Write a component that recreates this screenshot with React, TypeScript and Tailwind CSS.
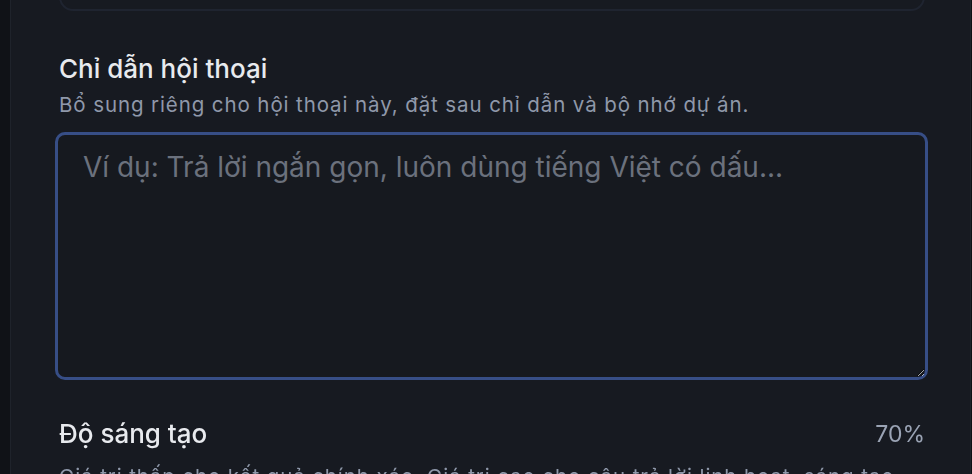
import { useState } from "react";

export default function App() {
  const [note, setNote] = useState("");

  return (
    <div
      className="flex h-[474px] w-full overflow-hidden bg-[#171a21]"
      style={{ fontFamily: "Inter, 'Noto Sans', sans-serif" }}
    >
      {/* sidebar edge */}
      <div className="w-[11px] shrink-0 border-r border-[#1f232b] bg-[#101217]" />

      <div className="flex min-w-0 flex-1 flex-col pl-[48px] pr-[45px]">
        {/* bottom of the previous card */}
        <div className="-mt-[40px] h-[51px] shrink-0 rounded-[14px] border-2 border-[#1f2430]" />

        {/* conversation instructions */}
        <section className="mt-[42px]">
          <h2 className="text-[26px] leading-[32px] font-medium text-[#e8eaee]">Chỉ dẫn hội thoại</h2>
          <p className="mt-[7px] text-[20.5px] leading-[26px] tracking-[0.9px] text-[#8f98aa]">
            Bổ sung riêng cho hội thoại này, đặt sau chỉ dẫn và bộ nhớ dự án.
          </p>
          <textarea
            autoFocus
            value={note}
            onChange={(e) => setNote(e.target.value)}
            placeholder="Ví dụ: Trả lời ngắn gọn, luôn dùng tiếng Việt có dấu..."
            className="mt-[14px] -mx-[4px] block h-[248px] w-[calc(100%+7px)] resize-y rounded-[10px] border-[3px] border-[#374e86] bg-[#16191f] px-[25px] pt-[14px] text-[28px] leading-[36px] text-[#d6d9df] caret-[#6d7380] outline-none placeholder:text-[#6b717d]"
          />
        </section>

        {/* creativity slider */}
        <section className="mt-[38px]">
          <div className="flex items-center justify-between">
            <h3 className="text-[26px] leading-[32px] font-medium text-[#e8eaee]">Độ sáng tạo</h3>
            <span className="text-[23px] leading-[32px] text-[#9aa3b4]">70%</span>
          </div>
          <p className="mt-[14px] text-[20.5px] leading-[26px] tracking-[0.9px] text-[#8f98aa]">
            Giá trị thấp cho kết quả chính xác. Giá trị cao cho câu trả lời linh hoạt, sáng tạo hơn.
          </p>
        </section>
      </div>

      {/* right edge */}
      <div className="w-[2px] shrink-0 border-l border-[#1f232b] bg-[#101217]" />
    </div>
  );
}
